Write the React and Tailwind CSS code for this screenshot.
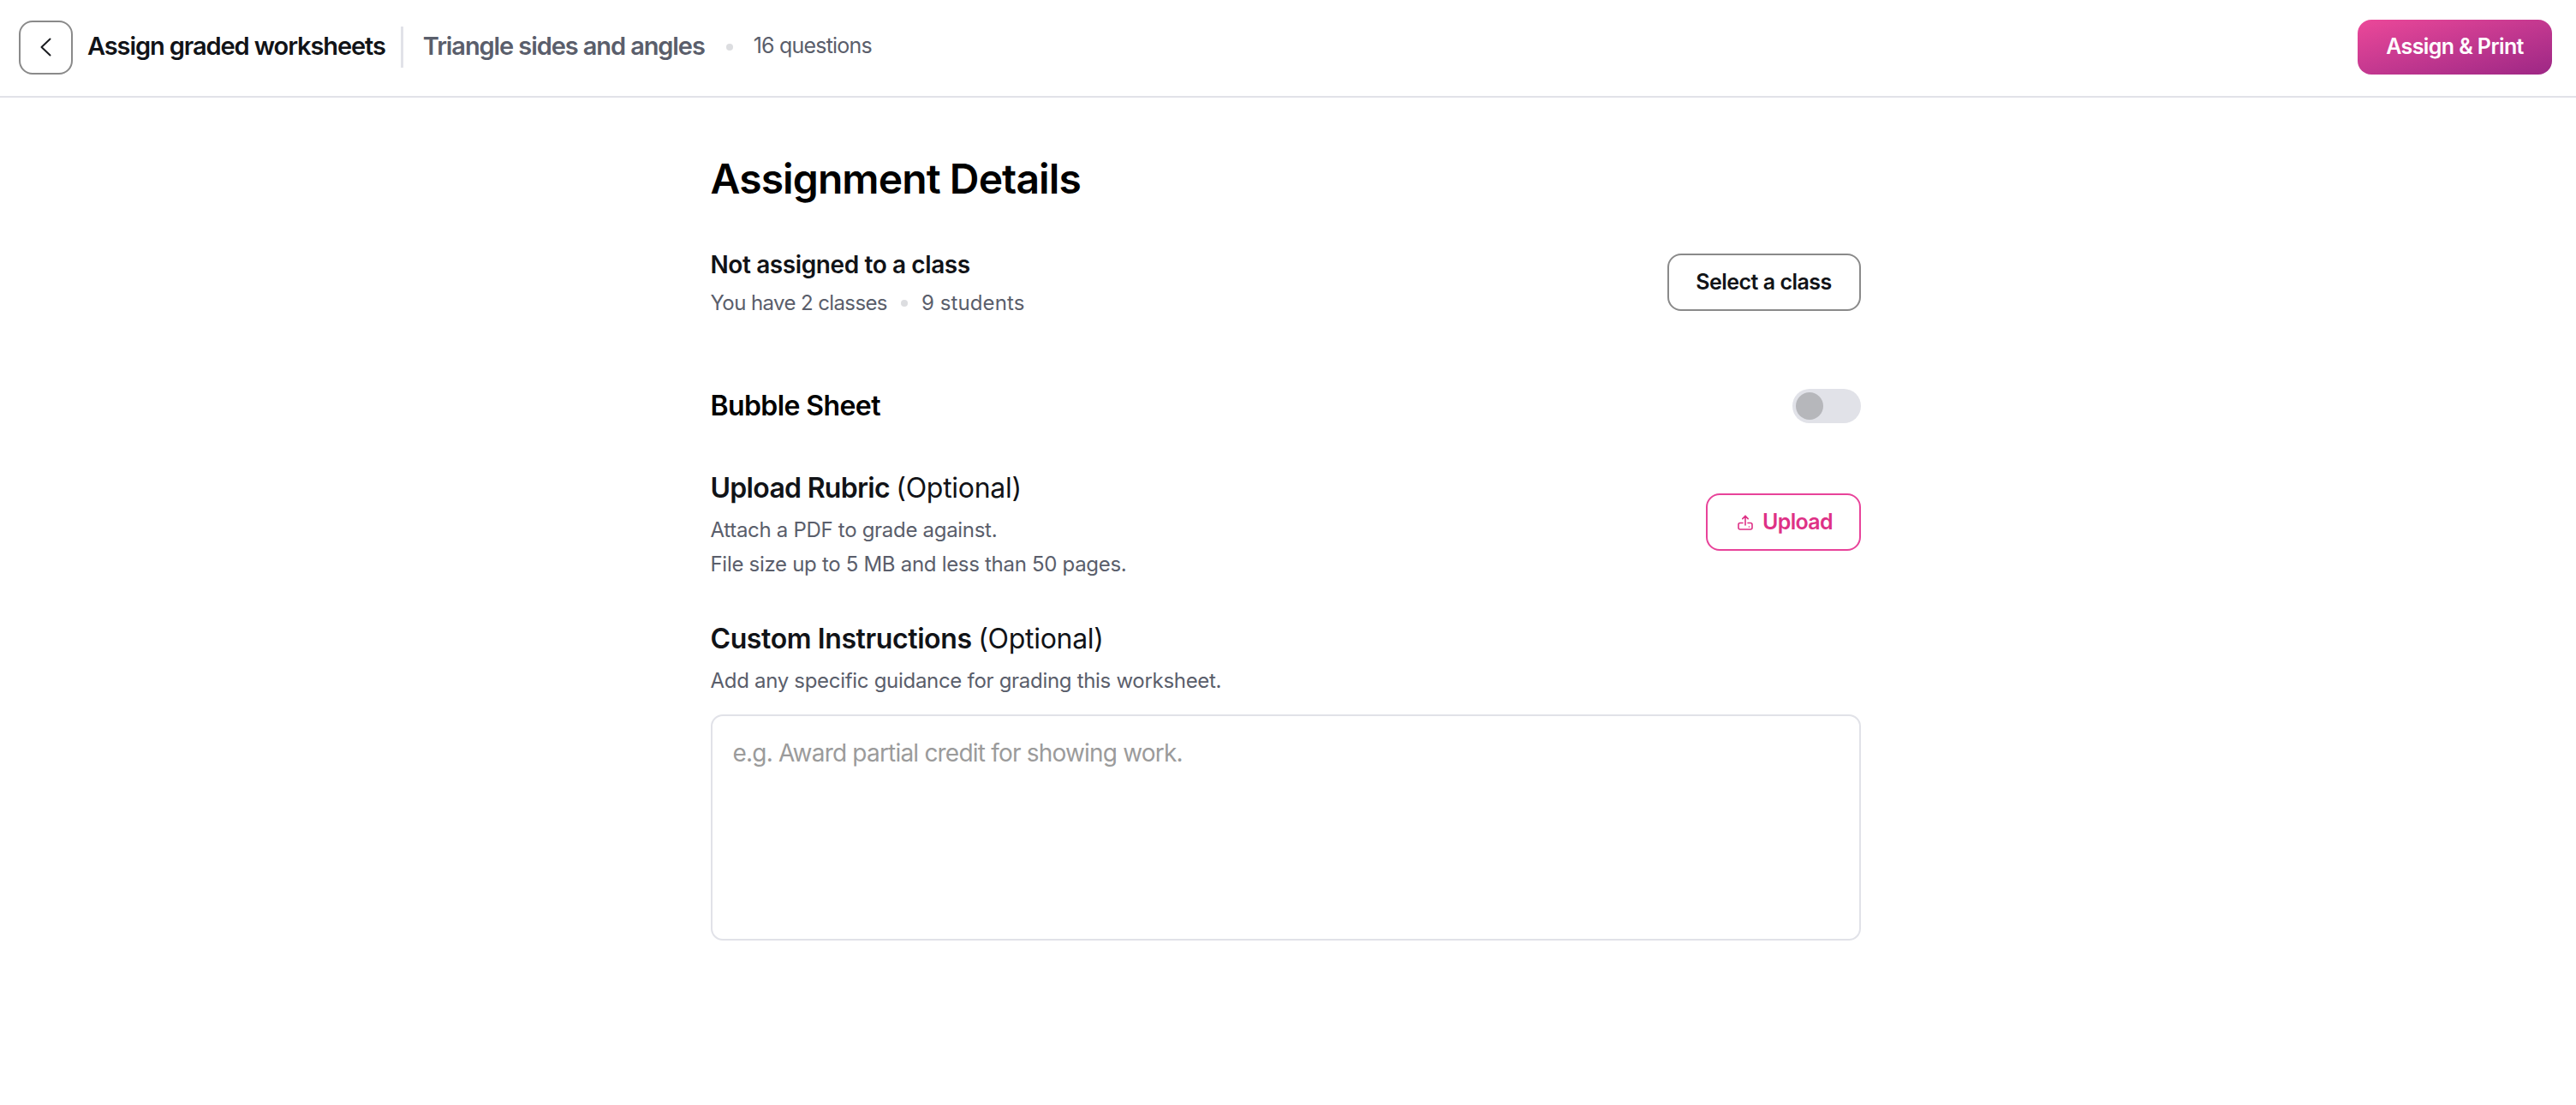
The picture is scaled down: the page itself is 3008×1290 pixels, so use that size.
const Dot = () => <span className="block h-2 w-2 shrink-0 rounded-full bg-[#dcdde0]" />;

const UploadIcon = () => (
  <svg width="18" height="18" viewBox="0 0 18 18" fill="none" stroke="currentColor" strokeWidth="1.6" strokeLinecap="round" strokeLinejoin="round">
    <path d="M9 12V1.5M5.8 4.6 9 1.2l3.2 3.4" />
    <path d="M6 9.5H3a2 2 0 0 0-2 2V15a2 2 0 0 0 2 2h12a2 2 0 0 0 2-2v-3.5a2 2 0 0 0-2-2h-3" />
    <path d="M13.4 14h.01" />
  </svg>
);

const BackIcon = () => (
  <svg width="18" height="24" viewBox="0 0 18 24" fill="none" stroke="#1a1c20" strokeWidth="2" strokeLinecap="round" strokeLinejoin="round">
    <path d="M13.5 2.5 3.5 12l10 9.5" />
  </svg>
);

export default function App() {
  return (
    <div className="min-h-screen bg-white font-[Inter,sans-serif] text-[#111317]">
      <header className="flex h-[114px] items-center justify-between border-b-2 border-[#e1e2e8] pb-[2px] pl-[22px] pr-[28px]">
        <div className="flex items-center">
          <button className="flex h-[63px] w-[63px] items-center justify-center rounded-[16px] border-2 border-[#8a8a8a] bg-white">
            <BackIcon />
          </button>
          <h2 className="mb-[2px] ml-[17px] text-[29px] font-semibold tracking-[-1.1px]">Assign graded worksheets</h2>
          <span className="ml-[18px] h-[48px] w-[3px] bg-[#e1e2e8]" />
          <span className="mb-[2px] ml-[23px] text-[29px] font-semibold tracking-[-1.1px] text-[#5a5e6b]">Triangle sides and angles</span>
          <span className="ml-[25px]"><Dot /></span>
          <span className="mb-[2px] ml-[24px] text-[25px] tracking-[-0.8px] text-[#5a5e6b]">16 questions</span>
        </div>
        <button className="flex h-[64px] w-[227px] items-center justify-center rounded-[16px] bg-linear-to-br from-[#ec4899] to-[#9d2785] text-[25px] font-semibold tracking-[-0.6px] text-white">
          Assign &amp; Print
        </button>
      </header>

      <main className="mr-[6px] flex justify-center">
        <div className="w-[1343px]">
          <h1 className="mt-[65px] text-[48px] font-semibold leading-[60px] tracking-[-0.9px] text-black">Assignment Details</h1>

          <section className="mt-[50px] flex items-start justify-between">
            <div>
              <h3 className="text-[28px] font-semibold leading-[40px] tracking-[-0.4px]">Not assigned to a class</h3>
              <div className="mt-[5px] flex items-center text-[24px] leading-[40px] tracking-[-0.6px] text-[#5a5e6b]">
                <span>You have 2 classes</span>
                <span className="mx-[16px]"><Dot /></span>
                <span className="tracking-[0.1px]">9 students</span>
              </div>
            </div>
            <button className="mt-[7px] h-[67px] w-[226px] rounded-[16px] border-2 border-[#8a8a8a] bg-white text-[25px] font-semibold tracking-[-0.5px]">
              Select a class
            </button>
          </section>

          <section className="mt-[76px] flex items-center justify-between">
            <h3 className="text-[32px] font-semibold leading-[48px] tracking-[-0.6px] text-black">Bubble Sheet</h3>
            <div className="flex h-[40px] w-[80px] items-center rounded-full bg-[#e1e2e8] p-[4px]">
              <span className="h-[32px] w-[32px] rounded-full bg-[#b6b7bb]" />
            </div>
          </section>

          <section className="mt-[50px] flex items-start justify-between">
            <div>
              <h3 className="text-[32px] font-semibold leading-[44px] tracking-[-0.7px]">
                Upload Rubric <span className="font-normal tracking-[-0.3px]">(Optional)</span>
              </h3>
              <div className="mt-[7px] text-[24px] leading-[40px] tracking-[-0.3px] text-[#5a5e6b]">
                <p>Attach a PDF to grade against.</p>
                <p>File size up to 5 MB and less than 50 pages.</p>
              </div>
            </div>
            <button className="mt-[28px] flex h-[67px] w-[181px] items-center justify-center gap-[11px] rounded-[16px] border-2 border-[#e8439a] bg-white pl-[5px] text-[25px] font-semibold tracking-[-0.7px] text-[#de3186]">
              <UploadIcon />
              Upload
            </button>
          </section>

          <section className="mt-[45px]">
            <h3 className="text-[32px] font-semibold leading-[44px] tracking-[-0.4px]">
              Custom Instructions <span className="font-normal tracking-[-0.3px]">(Optional)</span>
            </h3>
            <p className="mt-[7px] text-[24px] leading-[40px] tracking-[-0.3px] text-[#5a5e6b]">Add any specific guidance for grading this worksheet.</p>
            <textarea
              className="mt-[19px] block h-[264px] w-full resize-none rounded-[14px] border-2 border-[#e1e2e8] px-[24px] pb-[20px] pt-[23px] text-[28px] leading-[40px] tracking-[-0.8px] outline-none placeholder:text-[#9b9b9b]"
              placeholder="e.g. Award partial credit for showing work."
            />
          </section>
        </div>
      </main>
    </div>
  );
}
